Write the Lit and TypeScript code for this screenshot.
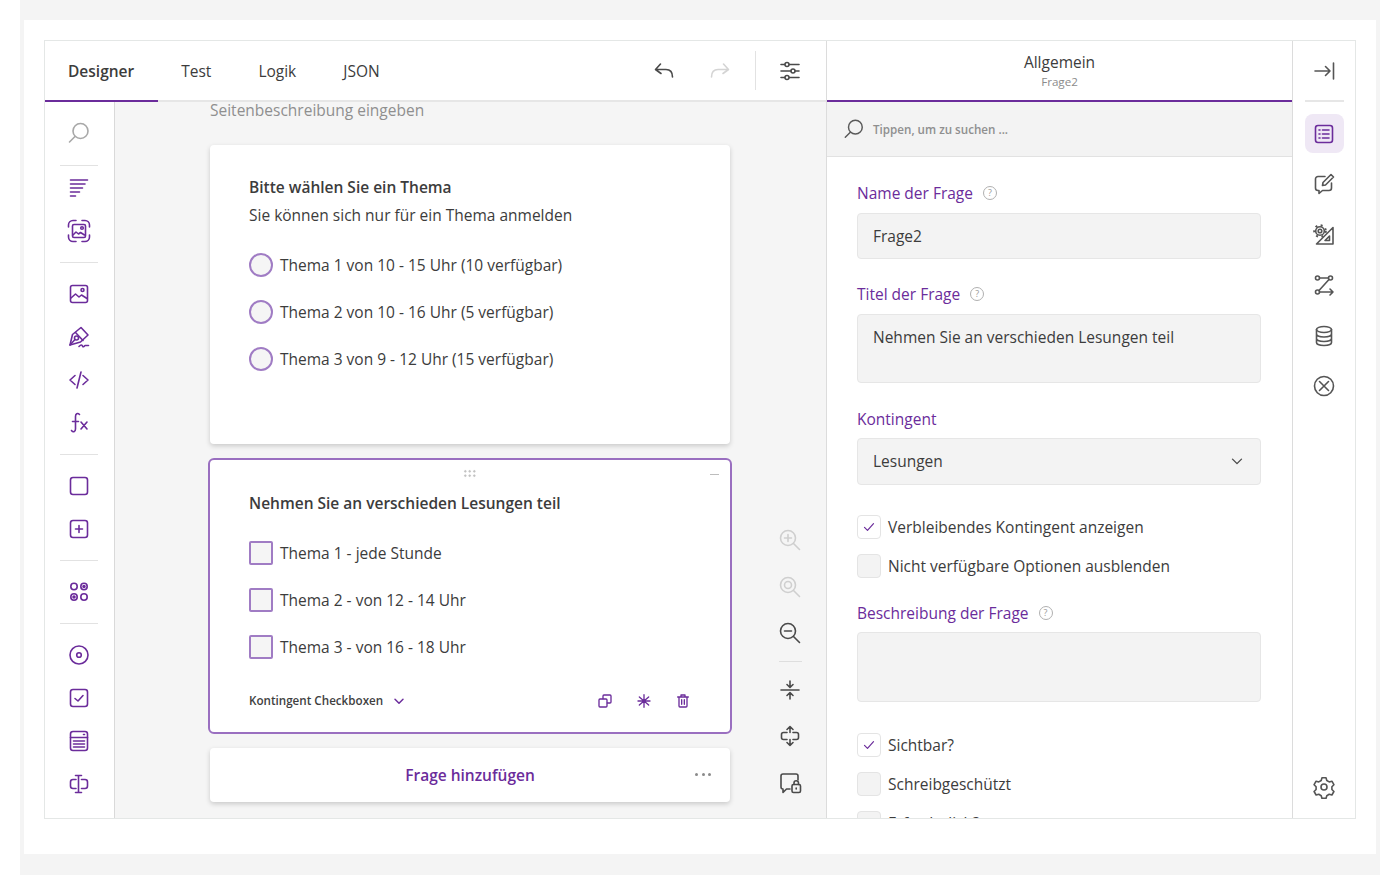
import { css, html, LitElement, svg } from 'lit';
import { customElement } from 'lit/decorators.js';

const icons: Record<string, any> = {
  search: svg`<circle cx="13.5" cy="10" r="7.5"/><path d="M8 15.5 2.5 21"/>`,
  title: svg`<path d="M3.500 4h17M3.500 8h14.500M3.500 12h12M3.500 16h9M3.500 20h5"/>`,
  frame: svg`<path d="M1.500 8V6A4.500 4.500 0 0 1 6 1.500h3M15 1.500h3A4.500 4.500 0 0 1 22.500 6v2M22.500 16v2a4.500 4.500 0 0 1-4.500 4.500h-3M9 22.500H6A4.500 4.500 0 0 1 1.500 18v-2"/><rect x="5.500" y="5.500" width="13" height="13" rx="1.500"/><path d="m6 16 3-3 2.500 2 2-1.500 4 2.500"/><circle cx="15" cy="9" r="1.300"/>`,
  image: svg`<rect x="3.500" y="3.500" width="17" height="17" rx="2"/><path d="m4 16 4.500-4 3.500 3 2.500-2 5.500 3.500"/><circle cx="15.500" cy="8" r="1.500"/>`,
  pen: svg`<path d="M3 20 5.500 9.500 14 2.500 21 10 13.500 17Z"/><circle cx="9.500" cy="13" r="2"/><path d="m3 20 5-5.500M8.500 7.500l7.500 8M12 21.500c2-2 3-2 3.500-.500s1.500.500 2.500-.500h3.500"/>`,
  code: svg`<path d="M8 7.500 3 12l5 4.500M16 7.500l5 4.500-5 4.500M14 4l-4 16"/>`,
  fx: svg`<path d="M12.500 3.500C10.500 1.500 8.500 3 8.500 5.500V18C8.500 21 6 21.500 4.500 19.500M5.500 10.500h6M14 11l6 7M20 11l-6 7"/>`,
  square: svg`<rect x="3.500" y="3.500" width="17" height="17" rx="2.500"/>`,
  plus: svg`<rect x="3.500" y="3.500" width="17" height="17" rx="2.500"/><path d="M12 8.500v7M8.500 12h7"/>`,
  dots: svg`<circle cx="7" cy="6.500" r="3.200"/><circle cx="17" cy="6.500" r="3.200"/><circle cx="7" cy="17" r="3.200"/><circle cx="17" cy="17" r="3.200"/><circle cx="17" cy="6.500" r="1" fill="currentColor"/><circle cx="7" cy="17" r="1" fill="currentColor"/>`,
  radio: svg`<circle cx="12" cy="12" r="9"/><circle cx="12" cy="12" r="2.300"/>`,
  check: svg`<rect x="3.500" y="3.500" width="17" height="17" rx="2.500"/><path d="m8 12.500 3 2.500 5-5.500"/>`,
  list: svg`<rect x="3.500" y="2.500" width="17" height="19" rx="2.500"/><path d="M3.500 8.500h17M6.500 12h11M6.500 15h11M6.500 18h11M16.500 5.500h1"/>`,
  cursor: svg`<path d="M9 7.500H6A2.500 2.500 0 0 0 3.500 10v4A2.500 2.500 0 0 0 6 16.500h3M14.500 7.500H18a2.500 2.500 0 0 1 2.500 2.500v4a2.500 2.500 0 0 1-2.500 2.500h-3.500M11.500 4v16M8.500 3.500h6M8.500 20.500h6"/>`,
  undo: svg`<path d="M8.500 5 3.500 10.500l5.500 4M4 10.500h10c4 0 6.500 2.500 6.500 7.500"/>`,
  redo: svg`<path d="M15.500 5l5 5.500-5.500 4M20 10.500H10c-4 0-6.500 2.500-6.500 7.500"/>`,
  sliders: svg`<path d="M3 5.500h18M3 12h18M3 18.500h18"/><circle cx="9" cy="5.500" r="2" fill="#fff"/><circle cx="15" cy="12" r="2" fill="#fff"/><circle cx="9" cy="18.500" r="2" fill="#fff"/>`,
  zoomIn: svg`<circle cx="10" cy="10" r="7.500"/><path d="m15.500 15.500 6 6M10 6.500v7M6.500 10h7"/>`,
  zoomReset: svg`<circle cx="10" cy="10" r="7.500"/><circle cx="10" cy="10" r="3.500"/><path d="m15.500 15.500 6 6"/>`,
  zoomOut: svg`<circle cx="10" cy="10" r="7.500"/><path d="m15.500 15.500 6 6M6.500 10h7"/>`,
  collapse: svg`<path d="M3 12h18M12 3v6M9 6.500 12 9.500l3-3M12 21v-6M9 17.500l3-3 3 3"/>`,
  expand: svg`<path d="M12 2.500v6M9 5.500l3-3 3 3M12 21.500v-6M9 18.500l3 3 3-3M9 8.500H5.500A2 2 0 0 0 3.500 10.500v3a2 2 0 0 0 2 2H9M15 8.500h3.500a2 2 0 0 1 2 2v3a2 2 0 0 1-2 2H15"/>`,
  lock: svg`<path d="M20 9V5a2 2 0 0 0-2-2H5a2 2 0 0 0-2 2v11a2 2 0 0 0 2 2v3.500l3.500-3.500H12"/><rect x="14" y="13.500" width="8.500" height="8" rx="1.500"/><path d="M16 13.500V12a2.200 2.200 0 0 1 4.500 0v1.500M18.200 17v1"/>`,
  collapseRight: svg`<path d="M3 12h15M13.500 7.500 18 12l-4.500 4.500M21.500 4v16"/>`,
  listBox: svg`<rect x="3.500" y="3.500" width="17" height="17" rx="2.500"/><path d="M7 8h1M7 12h1M7 16h1M10.500 8h6.500M10.500 12h6.500M10.500 16h6.500"/>`,
  edit: svg`<path d="M13 4.500H6A2.500 2.500 0 0 0 3.500 7v9A2.500 2.500 0 0 0 6 18.500h1v3l3.500-3H17a2.500 2.500 0 0 0 2.500-2.500v-5"/><path d="m10.500 13.500.5-3 8-8 2.500 2.500-8 8Z"/>`,
  layout: svg`<circle cx="8" cy="8" r="1.800"/><circle cx="8" cy="8" r="4.300"/><circle cx="8" cy="8" r="5.800" stroke-width="2" stroke-dasharray="2 3.460" stroke-linecap="butt"/><path d="M21 4.500V21H4.500ZM17.500 13v4.500H13Z"/>`,
  logic: svg`<circle cx="5.500" cy="5" r="2"/><circle cx="18.500" cy="5" r="2"/><circle cx="5.500" cy="19" r="2"/><path d="M7.500 5h9M17 6.500 7 17.500M7.500 19H21M18 16l3 3-3 3"/>`,
  data: svg`<ellipse cx="12" cy="5.500" rx="7.500" ry="3"/><path d="M4.500 5.500v13c0 1.700 3.400 3 7.500 3s7.500-1.300 7.500-3v-13M4.500 10c0 1.700 3.400 3 7.500 3s7.500-1.300 7.500-3M4.500 14.500c0 1.700 3.400 3 7.500 3s7.500-1.300 7.500-3"/>`,
  clear: svg`<circle cx="12" cy="12" r="9.500"/><path d="m7.500 7.500 9 9M16.500 7.500l-9 9"/>`,
  gear: svg`<circle cx="12" cy="12" r="3"/><path d="M10 2.800h4l.8 2.700 2.400 1.400 2.700-.700 2 3.500-2 2v2.800l2 2-2 3.500-2.700-.700-2.400 1.400-.8 2.700h-4l-.8-2.700-2.400-1.400-2.700.700-2-3.500 2-2v-2.800l-2-2 2-3.500 2.700.700 2.400-1.400Z"/>`,
  copy: svg`<rect x="3" y="9" width="12" height="12" rx="1.500"/><path d="M9 8.500V4.500A1.500 1.500 0 0 1 10.500 3H19.500A1.500 1.500 0 0 1 21 4.500V13.500A1.500 1.500 0 0 1 19.500 15H15.500"/>`,
  star: svg`<path d="M12 2.500v19M5 6l14 12M19 6 5 18M3 12h18"/>`,
  trash: svg`<path d="M4 6h16M9 6V3h6V6M6 6v13.500A1.500 1.500 0 0 0 7.500 21h9a1.500 1.500 0 0 0 1.500-1.500V6M10 10v7M14 10v7"/>`,
  chevron: svg`<path d="m6 9.500 6 6 6-6"/>`,
  tick: svg`<path d="m6 12.500 4 4 8-9"/>`,
};

const icon = (name: string, cls = '') => html`<svg class="icon ${cls}" viewBox="0 0 24 24">${icons[name]}</svg>`;

// null is a divider between groups
const toolbox = [['search', 'muted'], null, ['title'], ['frame'], null, ['image'], ['pen'], ['code'], ['fx'], null, ['square'], ['plus'], null, ['dots'], null, ['radio'], ['check'], ['list'], ['cursor']];

const help = html`<span class="help">?</span>`;

@customElement('app-root')
export class AppRoot extends LitElement {

    static get styles() {
        return css`
      :host {
        display: block;
        height: 875px;
        overflow: hidden;
        background: #fff;
        color: #3c3c3c;
        font-family: "Open Sans", sans-serif;
        font-size: 15.5px;
        --purple: #6b2c9b;
      }
      .band {
        margin: 0 20px;
        padding: 20px 4px 21px;
        background: #f4f4f4;
      }
      .sheet {
        background: #fff;
        padding: 20px 20px 35px;
      }
      .frame {
        display: flex;
        height: 779px;
        box-sizing: border-box;
        border: 1px solid #e4e7e6;
        overflow: hidden;
        background: #fff;
      }
      .icon {
        display: block;
        width: 24px;
        height: 24px;
        flex: none;
        fill: none;
        stroke: currentColor;
        stroke-width: 1.6;
        stroke-linecap: round;
        stroke-linejoin: round;
      }
      .muted { color: #a8a8a8; }
      .faint { color: #cfcfcf; }

      .designer {
        width: 781px;
        display: flex;
        flex-direction: column;
        border-right: 1px solid #dcdcdc;
        flex: none;
      }
      .top {
        height: 61px;
        flex: none;
        box-sizing: border-box;
        display: flex;
        border-bottom: 2px solid #e6e6e6;
      }
      .tab {
        padding: 0 24px 0 23px;
        height: 61px;
        box-sizing: border-box;
        display: flex;
        align-items: center;
        border-bottom: 2px solid transparent;
      }
      .tab.active {
        font-weight: 600;
        border-bottom-color: var(--purple);
      }
      .actions {
        margin-left: auto;
        display: flex;
        align-items: center;
        padding-right: 24px;
        color: #4a4a4a;
      }
      .actions .redo { margin-left: 32px; color: #d4d4d4; }
      .actions .sep {
        width: 1px;
        height: 39px;
        background: #e2e2e2;
        margin: 0 22px 0 23px;
      }
      .body {
        flex: 1;
        display: flex;
        min-height: 0;
      }
      .toolbox {
        width: 68px;
        flex: none;
        border-right: 1px solid #d9d9d9;
        display: flex;
        flex-direction: column;
        align-items: center;
        color: var(--purple);
        padding: 9px 1px 0 0;
      }
      .toolbox .tool {
        height: 43px;
        flex: none;
        display: flex;
        align-items: center;
        justify-content: center;
      }
      .toolbox .rule {
        width: 38px;
        height: 1px;
        flex: none;
        background: #e2e2e2;
        margin: 9.5px 0;
      }
      .toolbox .rule:nth-child(2) { margin: 10.5px 0 0.5px; }
      .canvas {
        flex: 1;
        min-width: 0;
        background: #f5f5f5;
        display: flex;
        padding-left: 95px;
      }
      .pages {
        width: 520px;
        flex: none;
      }
      .page-desc {
        color: #8f8f8f;
        line-height: 16px;
        margin-bottom: 27px;
      }
      .card {
        background: #fff;
        border-radius: 4px;
        box-shadow: 0 2px 5px rgba(0, 0, 0, .18);
        padding: 29px 39px 0;
        box-sizing: border-box;
        position: relative;
      }
      .card.first { height: 299px; }
      .card.selected {
        height: 276px;
        margin: 14px -2px 0;
        padding: 30px 39px 0;
        border: 2px solid #9a6fc0;
        border-radius: 6px;
        box-shadow: none;
      }
      .card-title {
        font-weight: 600;
        line-height: 27px;
      }
      .card-sub {
        line-height: 27px;
        margin-top: 1px;
      }
      .options {
        margin-top: 24px;
        display: flex;
        flex-direction: column;
        gap: 23px;
      }
      .opt {
        display: flex;
        align-items: center;
        gap: 7px;
        height: 24px;
      }
      .mark {
        width: 24px;
        height: 24px;
        box-sizing: border-box;
        flex: none;
        border: 2px solid #a07cc4;
        background: #f5f5f5;
        border-radius: 2px;
      }
      .mark.round { border-radius: 50%; }
      .grip {
        position: absolute;
        top: 9px;
        left: 253px;
        width: 13px;
        height: 10px;
        background: radial-gradient(circle, #bdbdbd 1px, transparent 1.3px) 0 0 / 4.500px 4.500px;
      }
      .dash {
        position: absolute;
        top: 14px;
        right: 11px;
        width: 9px;
        height: 1px;
        background: #bdbdbd;
      }
      .card-foot {
        display: flex;
        align-items: center;
        margin-top: 29.500px;
        height: 24px;
        font-size: 11.65px;
        font-weight: 600;
        color: #3f3f3f;
      }
      .card-foot .chevron {
        width: 16px;
        height: 16px;
        margin-left: 8px;
        color: var(--purple);
        stroke-width: 2.200;
      }
      .foot-actions {
        margin-left: auto;
        display: flex;
        gap: 23px;
        color: var(--purple);
      }
      .foot-actions .icon { width: 16px; height: 16px; stroke-width: 2; }
      .add {
        margin-top: 14px;
        height: 54px;
        background: #fff;
        border-radius: 4px;
        box-shadow: 0 2px 5px rgba(0, 0, 0, .18);
        display: flex;
        align-items: center;
        justify-content: center;
        color: var(--purple);
        font-weight: 600;
        position: relative;
      }
      .more {
        position: absolute;
        right: 19px;
        top: 25px;
        display: flex;
        gap: 3.500px;
      }
      .more i {
        width: 3px;
        height: 3px;
        border-radius: 50%;
        background: #8a8a8a;
      }
      .zoom {
        margin-left: 48px;
        margin-top: 426px;
        display: flex;
        flex-direction: column;
        align-items: center;
        width: 24px;
        flex: none;
        color: #4a4a4a;
      }
      .zoom .icon + .icon { margin-top: 22.500px; }
      .zoom .rule {
        width: 23px;
        height: 1px;
        background: #dedede;
        margin: 16px 0 15.500px;
      }
      .zoom .rule + .icon { margin-top: 0; }

      .props {
        width: 465px;
        flex: none;
        display: flex;
        flex-direction: column;
      }
      .props-head {
        height: 61px;
        flex: none;
        box-sizing: border-box;
        border-bottom: 2px solid var(--purple);
        text-align: center;
        padding-top: 10px;
      }
      .props-head .name { line-height: 22px; }
      .props-head .sub {
        font-size: 11.65px;
        line-height: 17px;
        color: #8b8b8b;
      }
      .find {
        height: 55px;
        flex: none;
        box-sizing: border-box;
        background: #f3f3f3;
        border-bottom: 1px solid #e2e2e2;
        display: flex;
        align-items: center;
        padding-left: 16px;
        gap: 8px;
        font-size: 11.65px;
        font-weight: 600;
        color: #8f8f8f;
      }
      .find .icon { width: 22px; height: 22px; color: #5a5a5a; }
      .form {
        flex: 1;
        min-height: 0;
        overflow: hidden;
        padding: 26px 31px 0 30px;
      }
      .label {
        color: var(--purple);
        line-height: 20px;
        display: flex;
        align-items: center;
        gap: 10px;
        margin-bottom: 10px;
      }
      .label.tight { margin-bottom: 9px; }
      .help {
        width: 12px;
        height: 12px;
        box-sizing: content-box;
        border: 1px solid #b0b0b0;
        border-radius: 50%;
        font-size: 9px;
        line-height: 12px;
        text-align: center;
        color: #9a9a9a;
      }
      .field {
        width: 404px;
        box-sizing: border-box;
        background: #f3f3f3;
        border: 1px solid #e6e6e6;
        border-radius: 4px;
        padding: 0 15px;
        height: 46px;
        display: flex;
        align-items: center;
        margin-bottom: 25px;
      }
      .field.area {
        height: 69px;
        align-items: flex-start;
        padding-top: 10px;
        line-height: 24px;
        margin-bottom: 26px;
      }
      .field.area.tall { height: 70px; }
      .field.select {
        height: 47px;
        justify-content: space-between;
        margin-bottom: 30px;
        padding: 0 14px 2px 15px;
      }
      .field.select .icon { width: 18px; height: 18px; color: #4a4a4a; stroke-width: 1.800; }
      .checks {
        display: flex;
        flex-direction: column;
        gap: 15px;
      }
      .checks.first { margin-bottom: 25px; }
      .checks.last { margin-top: 31px; }
      .chk {
        display: flex;
        align-items: center;
        gap: 7px;
        height: 24px;
      }
      .box {
        width: 24px;
        height: 24px;
        box-sizing: border-box;
        border: 1px solid #e4e4e4;
        border-radius: 4px;
        background: #f3f3f3;
        flex: none;
        display: flex;
        align-items: center;
        justify-content: center;
      }
      .box.on { background: #fff; color: var(--purple); }
      .box .icon { width: 18px; height: 18px; }

      .rail {
        flex: 1;
        min-width: 0;
        border-left: 1px solid #dcdcdc;
        display: flex;
        flex-direction: column;
        align-items: center;
        color: #555;
      }
      .rail .collapse {
        height: 61px;
        width: 39px;
        flex: none;
        border-bottom: 2px solid #e6e6e6;
        display: flex;
        align-items: center;
        justify-content: center;
        box-sizing: border-box;
      }
      .rail .item {
        height: 50.500px;
        width: 39px;
        flex: none;
        display: flex;
        align-items: center;
        justify-content: center;
      }
      .rail .item.on {
        height: 39px;
        margin: 12px 0 6px;
        background: #efe8f5;
        border-radius: 8px;
        color: var(--purple);
      }
      .rail .gear { margin-top: auto; margin-bottom: 6px; }
    `;
    }

    render() {
        return html`
      <div class="band"><div class="sheet"><div class="frame">
        <div class="designer">
          <div class="top">
            <div class="tab active">Designer</div>
            <div class="tab">Test</div>
            <div class="tab">Logik</div>
            <div class="tab">JSON</div>
            <div class="actions">
              ${icon('undo')}
              <div class="redo">${icon('redo')}</div>
              <div class="sep"></div>
              ${icon('sliders')}
            </div>
          </div>
          <div class="body">
            <div class="toolbox">
              ${toolbox.map(t => t
            ? html`<div class="tool">${icon(t[0], t[1] || '')}</div>`
            : html`<div class="rule"></div>`)}
            </div>
            <div class="canvas">
              <div class="pages">
                <div class="page-desc">Seitenbeschreibung eingeben</div>
                <div class="card first">
                  <div class="card-title">Bitte wählen Sie ein Thema</div>
                  <div class="card-sub">Sie können sich nur für ein Thema anmelden</div>
                  <div class="options">
                    ${['Thema 1 von 10 - 15 Uhr (10 verfügbar)', 'Thema 2 von 10 - 16 Uhr (5 verfügbar)', 'Thema 3 von 9 - 12 Uhr (15 verfügbar)'].map(o => html`
                      <div class="opt"><span class="mark round"></span>${o}</div>`)}
                  </div>
                </div>
                <div class="card selected">
                  <div class="grip"></div>
                  <div class="dash"></div>
                  <div class="card-title">Nehmen Sie an verschieden Lesungen teil</div>
                  <div class="options">
                    ${['Thema 1 - jede Stunde', 'Thema 2 - von 12 - 14 Uhr', 'Thema 3 - von 16 - 18 Uhr'].map(o => html`
                      <div class="opt"><span class="mark"></span>${o}</div>`)}
                  </div>
                  <div class="card-foot">
                    Kontingent Checkboxen ${icon('chevron', 'chevron')}
                    <div class="foot-actions">${icon('copy')}${icon('star')}${icon('trash')}</div>
                  </div>
                </div>
                <div class="add">Frage hinzufügen<div class="more"><i></i><i></i><i></i></div></div>
              </div>
              <div class="zoom">
                ${icon('zoomIn', 'faint')}
                ${icon('zoomReset', 'faint')}
                ${icon('zoomOut')}
                <div class="rule"></div>
                ${icon('collapse')}
                ${icon('expand')}
                ${icon('lock')}
              </div>
            </div>
          </div>
        </div>
        <div class="props">
          <div class="props-head">
            <div class="name">Allgemein</div>
            <div class="sub">Frage2</div>
          </div>
          <div class="find">${icon('search')}Tippen, um zu suchen ...</div>
          <div class="form">
            <div class="label">Name der Frage ${help}</div>
            <div class="field">Frage2</div>
            <div class="label">Titel der Frage ${help}</div>
            <div class="field area">Nehmen Sie an verschieden Lesungen teil</div>
            <div class="label tight">Kontingent</div>
            <div class="field select">Lesungen ${icon('chevron')}</div>
            <div class="checks first">
              <div class="chk"><span class="box on">${icon('tick')}</span>Verbleibendes Kontingent anzeigen</div>
              <div class="chk"><span class="box"></span>Nicht verfügbare Optionen ausblenden</div>
            </div>
            <div class="label tight">Beschreibung der Frage ${help}</div>
            <div class="field area tall"></div>
            <div class="checks last">
              <div class="chk"><span class="box on">${icon('tick')}</span>Sichtbar?</div>
              <div class="chk"><span class="box"></span>Schreibgeschützt</div>
              <div class="chk"><span class="box"></span>Erforderlich?</div>
            </div>
          </div>
        </div>
        <div class="rail">
          <div class="collapse">${icon('collapseRight')}</div>
          <div class="item on">${icon('listBox')}</div>
          ${['edit', 'layout', 'logic', 'data', 'clear'].map(n => html`<div class="item">${icon(n)}</div>`)}
          <div class="item gear">${icon('gear')}</div>
        </div>
      </div></div></div>
    `;
    }
}
